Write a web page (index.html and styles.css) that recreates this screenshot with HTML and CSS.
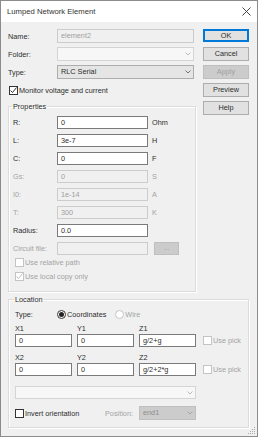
FILE: index.html
```html
<!DOCTYPE html>
<html lang="en">
<head>
    <meta charset="UTF-8">
    <title>Lumped Network Element</title>
    <link rel="stylesheet" href="styles.css">
</head>
<body>
    <div class="dialog">
        <div class="titlebar">
            <span class="title">Lumped Network Element</span>
            <svg class="close" width="9" height="9" viewBox="0 0 9 9"><path d="M0.5 0.5L8.5 8.5M8.5 0.5L0.5 8.5" stroke="#333" stroke-width="0.9"/></svg>
        </div>

        <div class="content">
            <div class="top">
                <div class="main">
                    <div class="fields">
                        <span>Name:</span>
                        <div class="input disabled">element2</div>
                        <span>Folder:</span>
                        <div class="select blank">
                            <span></span>
                            <svg class="chev" width="6" height="4" viewBox="0 0 6 4"><path d="M0.5 0.5L3 3L5.5 0.5" fill="none" stroke="#aaa" stroke-width="0.8"/></svg>
                        </div>
                        <span>Type:</span>
                        <div class="select">
                            <span>RLC Serial</span>
                            <svg class="chev" width="6" height="4" viewBox="0 0 6 4"><path d="M0.5 0.5L3 3L5.5 0.5" fill="none" stroke="#555" stroke-width="0.8"/></svg>
                        </div>
                    </div>

                    <div class="check-row monitor">
                        <span class="box checked"><svg width="9" height="9" viewBox="0 0 9 9"><path d="M1.5 4.5L3.5 6.5L7.5 1.5" fill="none" stroke="#222" stroke-width="0.9"/></svg></span>
                        Monitor voltage and current
                    </div>

                    <fieldset class="group props">
                        <legend>Properties</legend>
                        <div class="prop-grid">
                            <span>R:</span><div class="input">0</div><span class="unit">Ohm</span>
                            <span>L:</span><div class="input">3e-7</div><span class="unit">H</span>
                            <span>C:</span><div class="input">0</div><span class="unit">F</span>
                            <span class="off">Gs:</span><div class="input disabled">0</div><span class="unit off">S</span>
                            <span class="off">I0:</span><div class="input disabled">1e-14</div><span class="unit off">A</span>
                            <span class="off">T:</span><div class="input disabled">300</div><span class="unit off">K</span>
                            <span>Radius:</span><div class="input">0.0</div><span></span>
                            <span class="off">Circuit file:</span><div class="input disabled"></div><div class="btn small off-btn">...</div>
                        </div>
                        <div class="check-row sub">
                            <span class="box off-box"></span>
                            <span class="off">Use relative path</span>
                        </div>
                        <div class="check-row sub">
                            <span class="box off-box"><svg width="9" height="9" viewBox="0 0 9 9"><path d="M1.5 4.5L3.5 6.5L7.5 1.5" fill="none" stroke="#b5b5b5" stroke-width="0.9"/></svg></span>
                            <span class="off">Use local copy only</span>
                        </div>
                    </fieldset>
                </div>

                <div class="buttons">
                    <div class="btn default">OK</div>
                    <div class="btn">Cancel</div>
                    <div class="btn off-btn">Apply</div>
                    <div class="btn">Preview</div>
                    <div class="btn">Help</div>
                </div>
            </div>

            <fieldset class="group location">
                <legend>Location</legend>
                <div class="type-row">
                    <span class="type-label">Type:</span>
                    <span class="radio on"></span>
                    <span>Coordinates</span>
                    <span class="radio off-radio"></span>
                    <span class="off">Wire</span>
                </div>
                <div class="coords">
                    <span class="clabel">X1</span><span class="clabel">Y1</span><span class="clabel">Z1</span><span></span>
                    <div class="input">0</div><div class="input">0</div><div class="input">g/2+g</div>
                    <div class="check-row pick"><span class="box off-box"></span><span class="off">Use pick</span></div>
                    <span class="clabel second">X2</span><span class="clabel second">Y2</span><span class="clabel second">Z2</span><span></span>
                    <div class="input">0</div><div class="input">0</div><div class="input">g/2+2*g</div>
                    <div class="check-row pick"><span class="box off-box"></span><span class="off">Use pick</span></div>
                </div>
                <div class="select blank wide">
                    <span></span>
                    <svg class="chev" width="6" height="4" viewBox="0 0 6 4"><path d="M0.5 0.5L3 3L5.5 0.5" fill="none" stroke="#aaa" stroke-width="0.8"/></svg>
                </div>
                <div class="invert-row">
                    <div class="check-row">
                        <span class="box"></span>
                        Invert orientation
                    </div>
                    <span class="off">Position:</span>
                    <div class="select locked">
                        <span>end1</span>
                        <svg class="chev" width="6" height="4" viewBox="0 0 6 4"><path d="M0.5 0.5L3 3L5.5 0.5" fill="none" stroke="#999" stroke-width="0.8"/></svg>
                    </div>
                </div>
            </fieldset>
        </div>

        <svg class="grip" width="8" height="8" viewBox="0 0 8 8">
            <rect x="6" y="0" width="1" height="1" fill="#aaa"/>
            <rect x="4" y="2" width="1" height="1" fill="#aaa"/><rect x="6" y="2" width="1" height="1" fill="#aaa"/>
            <rect x="2" y="4" width="1" height="1" fill="#aaa"/><rect x="4" y="4" width="1" height="1" fill="#aaa"/><rect x="6" y="4" width="1" height="1" fill="#aaa"/>
            <rect x="0" y="6" width="1" height="1" fill="#aaa"/><rect x="2" y="6" width="1" height="1" fill="#aaa"/><rect x="4" y="6" width="1" height="1" fill="#aaa"/><rect x="6" y="6" width="1" height="1" fill="#aaa"/>
        </svg>
    </div>
</body>
</html>
```

FILE: styles.css
```css
body {
    margin: 0;
    font-family: "Liberation Sans", Arial, sans-serif;
    font-size: 7.3px;
    color: #2e2e2e;
    background: #fff;
}
.dialog {
    position: relative;
    width: 258px;
    height: 437px;
    box-sizing: border-box;
    border: 1px solid #8c8c8c;
    background: #f0f0f0;
    overflow: hidden;
}
.titlebar {
    height: 21px;
    background: #fff;
    display: flex;
    align-items: center;
    justify-content: space-between;
    padding: 0 6px 0 6px;
}
.title {
    font-size: 7.7px;
    color: #333;
}
.content {
    padding: 7px 7px 0 7px;
}
.top {
    display: flex;
    gap: 7px;
}
.main {
    width: 188px;
}
.fields {
    display: grid;
    grid-template-columns: 49px 137px;
    grid-auto-rows: 14px;
    row-gap: 4px;
    align-items: center;
}
.input, .select {
    box-sizing: border-box;
    height: 13px;
    line-height: 11px;
    border: 1px solid #7a7a7a;
    background: #fff;
    padding: 0 3px;
    white-space: nowrap;
    overflow: hidden;
}
.input.disabled {
    background: #f0f0f0;
    border-color: #cccccc;
    color: #a0a0a0;
}
.fields .input, .fields .select {
    height: 14px;
    line-height: 12px;
}
.select {
    display: flex;
    justify-content: space-between;
    align-items: center;
    background: #e5e5e5;
    border-color: #adadad;
    padding-right: 2px;
}
.select.blank {
    background: #f7f7f7;
    border-color: #d4d4d4;
}
.select.locked {
    background: #cccccc;
    border-color: #bfbfbf;
    color: #8c8c8c;
    height: 14px;
    line-height: 12px;
}
.check-row {
    display: flex;
    align-items: center;
    gap: 1px;
    height: 14px;
    white-space: nowrap;
}
.monitor {
    margin-top: 4px;
    margin-left: 1px;
}
.box {
    box-sizing: border-box;
    width: 9px;
    height: 9px;
    border: 1px solid #333;
    background: #fff;
    display: inline-flex;
    align-items: center;
    justify-content: center;
    flex: none;
}
.box svg {
    margin: -1px;
}
.box.off-box {
    border-color: #c4c4c4;
}
.off {
    color: #a3a3a3;
}
.group {
    margin: 0;
    border: 1px solid #dcdcdc;
    box-shadow: inset 1px 1px 0 #fff, 1px 1px 0 #fff;
}
.group legend {
    padding: 0 1px;
    line-height: 9px;
    margin-left: -1px;
}
.props {
    margin-top: 5px;
    padding: 5px 4px 0 4px;
    height: 190px;
    box-sizing: border-box;
    width: 188px;
}
.prop-grid {
    display: grid;
    grid-template-columns: 44px 91px auto;
    grid-auto-rows: 13px;
    row-gap: 5px;
    align-items: center;
}
.unit {
    margin-left: 4px;
}
.btn {
    box-sizing: border-box;
    height: 14px;
    line-height: 12px;
    text-align: center;
    background: #e1e1e1;
    border: 1px solid #adadad;
    color: #2e2e2e;
}
.btn.default {
    border-color: #0078d7;
    box-shadow: inset 0 0 0 1px #0078d7;
    height: 13px;
    line-height: 11px;
}
.btn.off-btn {
    background: #cccccc;
    border-color: #bfbfbf;
    color: #a0a0a0;
}
.btn.small {
    width: 25px;
    height: 13px;
    line-height: 10px;
    margin-left: 6px;
}
.sub {
    margin-left: 2px;
}
.sub:first-of-type {
    margin-top: 6px;
}
.buttons {
    width: 46px;
    display: flex;
    flex-direction: column;
    gap: 4px;
}
.buttons .default {
    margin-bottom: 1px;
}
.location {
    margin-top: 3px;
    padding: 3px 6px 7px 6px;
    width: 241px;
    box-sizing: border-box;
}
.type-row {
    display: flex;
    align-items: center;
    height: 14px;
    white-space: nowrap;
}
.type-label {
    width: 42px;
}
.radio {
    box-sizing: border-box;
    width: 9px;
    height: 9px;
    border-radius: 50%;
    border: 1px solid #333;
    background: #fff;
    margin-right: 1px;
    display: inline-flex;
    align-items: center;
    justify-content: center;
}
.radio.on::after {
    content: "";
    width: 5px;
    height: 5px;
    border-radius: 50%;
    background: #222;
}
.radio.off-radio {
    border-color: #c4c4c4;
    margin-left: 9px;
}
.coords {
    display: grid;
    grid-template-columns: 57px 57px 57px auto;
    column-gap: 5px;
    align-items: center;
}
.clabel {
    line-height: 9px;
    margin-top: 3px;
    margin-bottom: 1px;
}
.clabel.second {
    margin-top: 6px;
}
.pick {
    margin-left: 2px;
    gap: 1px;
    height: 13px;
}
.wide {
    width: 181px;
    margin-top: 10px;
}
.invert-row {
    margin-top: 7px;
    display: grid;
    grid-template-columns: 90px 34px 57px;
    align-items: center;
}
.grip {
    position: absolute;
    right: 1px;
    bottom: 1px;
}
```
